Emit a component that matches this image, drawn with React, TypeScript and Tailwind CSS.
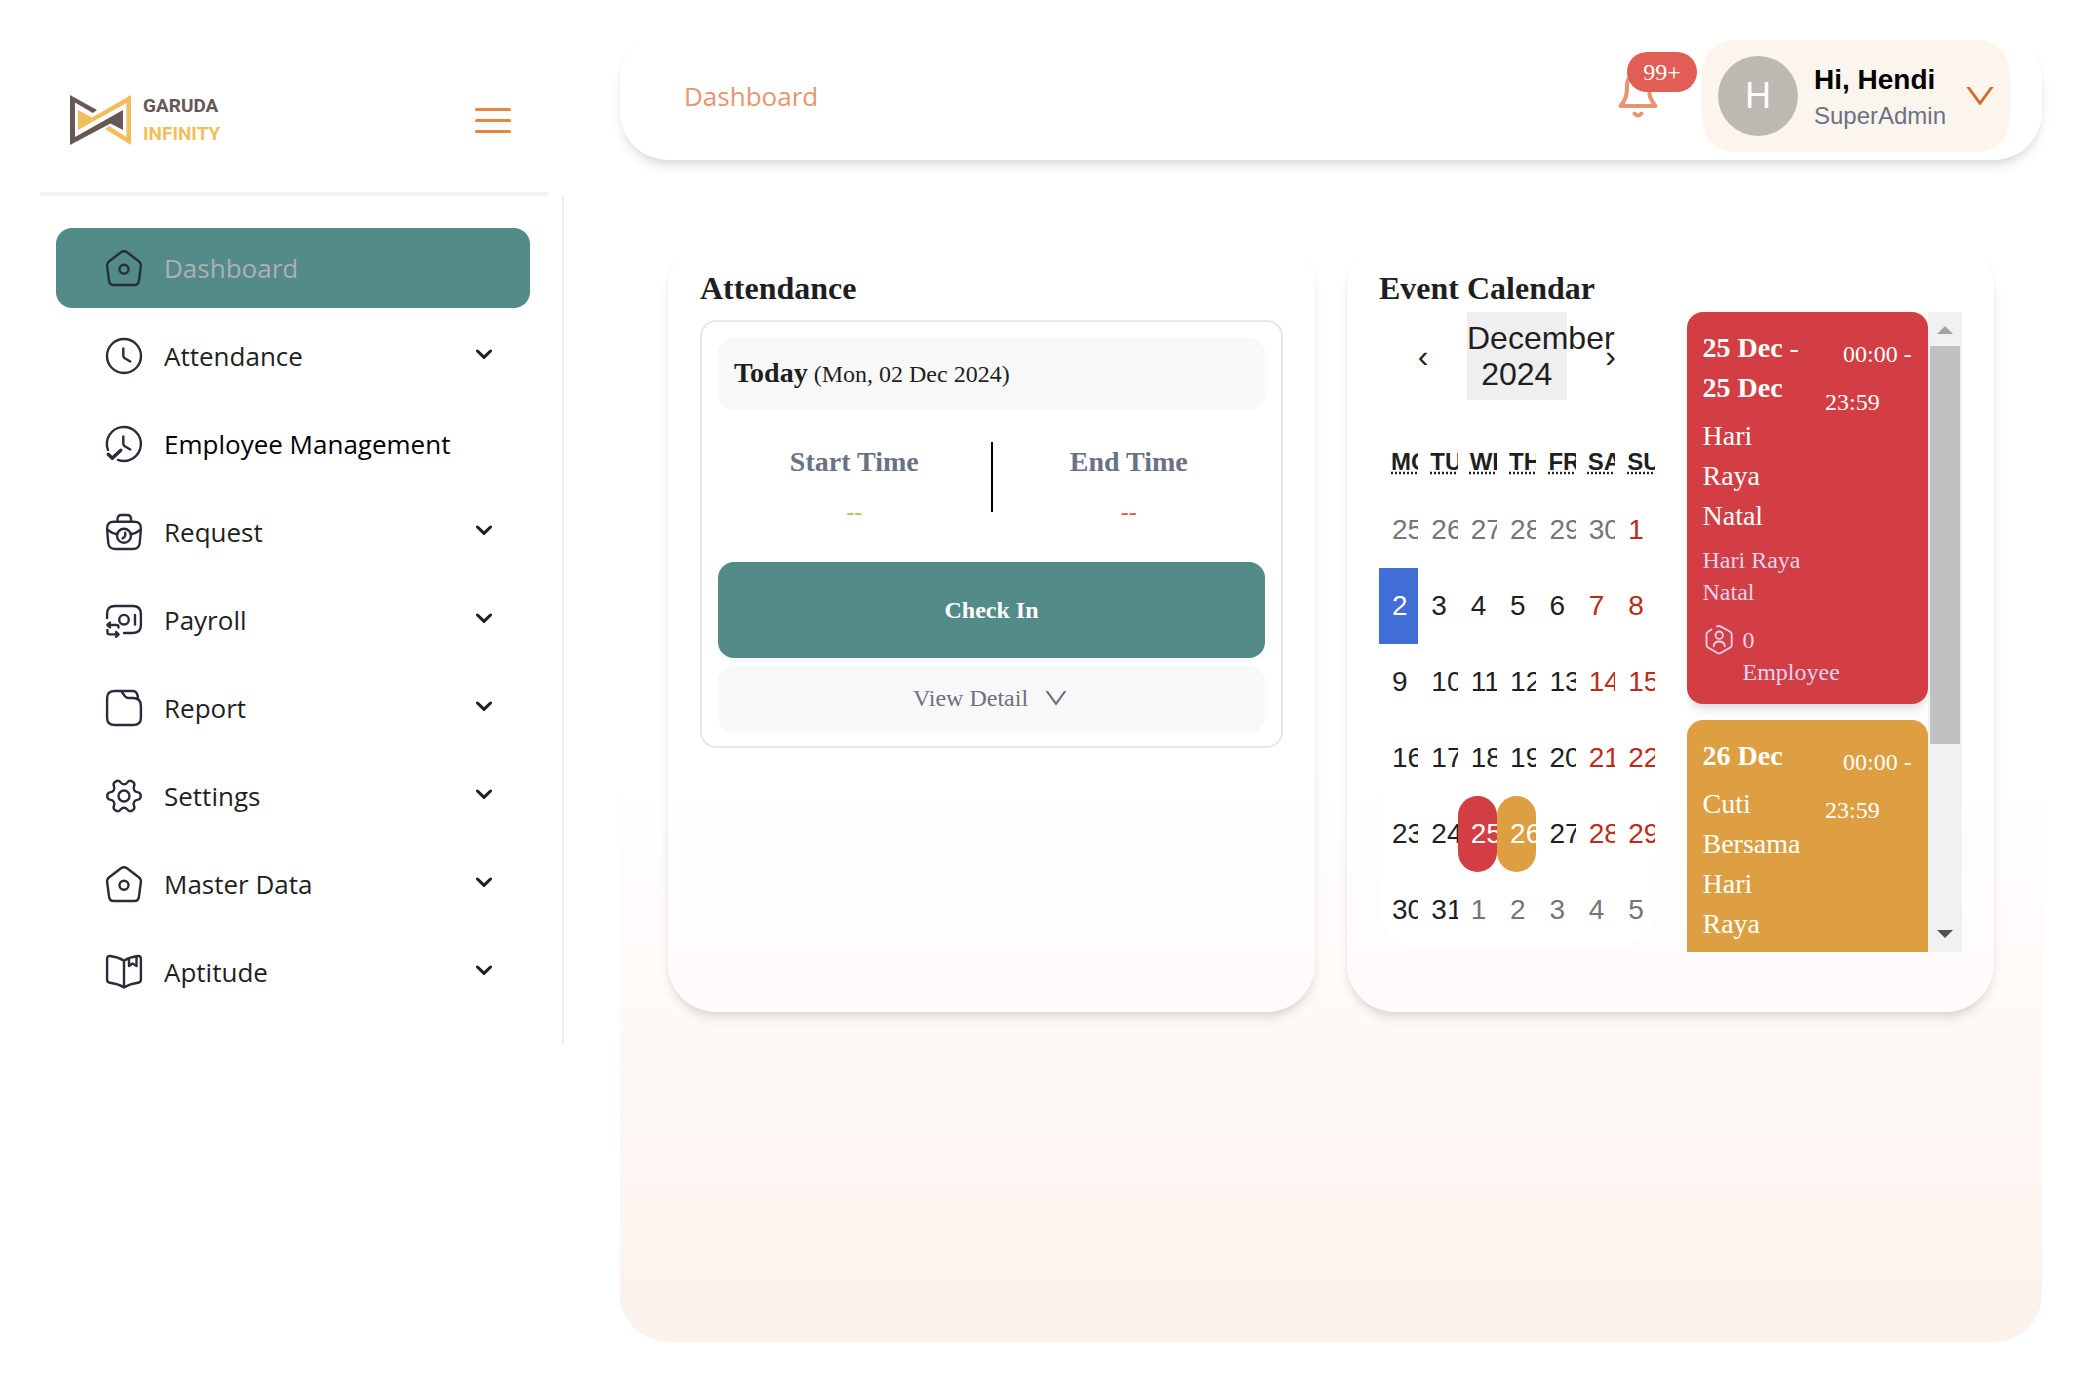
import type { ReactNode } from 'react';
import { AiOutlineDown } from 'react-icons/ai';

const ink = '#292d3a';

function Glyph({ children }: { children: ReactNode }) {
  return (
    <svg
      viewBox="0 0 36 36"
      className="size-9 shrink-0 overflow-visible"
      fill="none"
      stroke={ink}
      strokeWidth="2.4"
      strokeLinecap="round"
      strokeLinejoin="round"
      aria-hidden="true"
    >
      {children}
    </svg>
  );
}

const HomeGlyph = () => (
  <Glyph>
    <path d="M15 2.3Q18 0 21 2.3L32.8 11.2Q35.3 13.1 34.9 16L32.9 31Q32.3 35 28.5 35H7.5Q3.7 35 3.1 31L1.1 16Q.7 13.1 3.2 11.2Z" />
    <circle cx="18" cy="19.3" r="4.5" />
  </Glyph>
);

const ClockGlyph = () => (
  <Glyph>
    <circle cx="18" cy="18" r="17" />
    <path d="M17.3 10.5V17.5Q17.3 19.3 18.8 20.2L24.3 23.5" />
  </Glyph>
);

const ClockCheckGlyph = () => (
  <Glyph>
    <path d="M2 24A17 17 0 1 1 12 33.9" />
    <path d="M17.3 10.5V17.5Q17.3 19.3 18.8 20.2L24.3 23.5" />
    <path d="M2.2 28.3L6.3 32.2L14.8 24.2" strokeWidth="3.4" />
  </Glyph>
);

const BriefcaseGlyph = () => (
  <Glyph>
    <path d="M11.5 7.5V5Q11.5 1 15.5 1H21Q25 1 25 5V7.5" />
    <path d="M8 7.8H28Q35.5 7.8 34.9 15L33.8 28.5Q33.2 35 27 35H9Q2.8 35 2.2 28.5L1.1 15Q.5 7.8 8 7.8Z" />
    <path d="M1.8 16Q6 19.5 11.3 20.3M34.2 16Q30 19.5 24.7 20.3" />
    <circle cx="18" cy="21.8" r="7" />
    <path d="M19.2 18.8V21Q19.2 23 16.5 24.3" />
  </Glyph>
);

const PayrollGlyph = () => (
  <Glyph>
    <path d="M1.1 16V12Q1.1 4 9 4H27Q34.9 4 34.9 12V23Q34.9 31 27 31H18" />
    <circle cx="18" cy="17.7" r="4.8" />
    <path d="M29 13V22.5" />
    <path d="M12.5 25.5V25Q12.5 23 10.5 23H2M4 20.6L1.4 23L4 25.4" />
    <path d="M1.4 28V30Q1.4 32.4 3.8 32.4H12M10 30L12.6 32.4L10 34.8" />
  </Glyph>
);

const FolderGlyph = () => (
  <Glyph>
    <path d="M15.5 1.5L19 6.3Q20.3 8 22.5 8H27Q34.9 8 34.9 16V28Q34.9 35 27 35H9Q1.1 35 1.1 28V8Q1.1 1 9 1H27Q31.5 1 32 8.5" />
  </Glyph>
);

const GearGlyph = () => (
  <Glyph>
    <path
      transform="translate(18 18) rotate(90) scale(1.68) translate(-12 -12)"
      strokeWidth="1.4"
      d="M9.671 4.136a2.34 2.34 0 0 1 4.659 0 2.34 2.34 0 0 0 3.319 1.915 2.34 2.34 0 0 1 2.33 4.033 2.34 2.34 0 0 0 0 3.831 2.34 2.34 0 0 1-2.33 4.033 2.34 2.34 0 0 0-3.319 1.915 2.34 2.34 0 0 1-4.659 0 2.34 2.34 0 0 0-3.32-1.915 2.34 2.34 0 0 1-2.33-4.033 2.34 2.34 0 0 0 0-3.831A2.34 2.34 0 0 1 6.35 6.051a2.34 2.34 0 0 0 3.319-1.915"
    />
    <circle cx="18" cy="18" r="5.5" />
  </Glyph>
);

const BookGlyph = () => (
  <Glyph>
    <path d="M18 6.7Q12 3 4 2Q1.1 1.8 1.1 5V25.5Q1.1 28.4 4 28.8Q12 29.8 18 33.5Q24 29.8 32 28.8Q34.9 28.4 34.9 25.5V5Q34.9 1.8 32 2Q24 3 18 6.7ZM18 6.7V33.5" />
    <path d="M23 4.5V12L26.5 9.5L30.5 12V2.5" />
  </Glyph>
);

const menu = [
  { label: 'Dashboard', icon: <HomeGlyph />, link: true, active: true },
  { label: 'Attendance', icon: <ClockGlyph /> },
  { label: 'Employee Management', icon: <ClockCheckGlyph />, link: true },
  { label: 'Request', icon: <BriefcaseGlyph /> },
  { label: 'Payroll', icon: <PayrollGlyph /> },
  { label: 'Report', icon: <FolderGlyph /> },
  { label: 'Settings', icon: <GearGlyph /> },
  { label: 'Master Data', icon: <HomeGlyph /> },
  { label: 'Aptitude', icon: <BookGlyph /> },
];

const menuRow = "flex h-20 w-full items-center gap-[22px] rounded-2xl pr-[38px] pl-[50px] text-left text-[26px] font-['Open_Sans',sans-serif]";

function Sidebar() {
  return (
    <aside className="w-[532px] shrink-0 pl-2">
      <div className="mr-4 flex h-[164px] items-center justify-between border-b-4 border-[#f2f2f2] pt-4 pr-[37px] pl-[30px]">
        <a href="#home" aria-label="Garuda Infinity" className="flex items-center gap-3">
          <svg viewBox="0 0 61 50" className="h-[50px] w-[61px]" aria-hidden="true">
            <path fill="#665856" d="M0 0L27 15L22.8 18L5 7.5V42L53 15V35L40.5 28.5L0 50Z" />
            <path fill="#efbf5c" d="M61 0V50L35 34L39 31L56.5 42V8L8 35V15L22 22.5Z" />
          </svg>
          <span className="flex flex-col font-[Roboto,sans-serif] text-[19px] leading-7 font-bold">
            <span className="text-[#665856]">GARUDA</span>
            <span className="text-[#efbf5c]">INFINITY</span>
          </span>
        </a>
        <button aria-label="Toggle menu" className="flex flex-col gap-2">
          <span className="h-[3px] w-9 rounded-sm bg-[#e58640]" />
          <span className="h-[3px] w-9 rounded-sm bg-[#e58640]" />
          <span className="h-[3px] w-9 rounded-sm bg-[#e58640]" />
        </button>
      </div>
      <nav className="border-r-2 border-[#f0f0f0] py-8 pr-8 pl-4">
        <ul className="flex flex-col gap-2">
          {menu.map((m) => (
            <li key={m.label}>
              {m.link ? (
                <a href="#page" className={`${menuRow} ${m.active ? 'bg-[#538b89] text-[#b0b0b0]' : 'text-black'}`}>
                  {m.icon}
                  {m.label}
                </a>
              ) : (
                <button className={`${menuRow} text-[#1f1f1f]`}>
                  {m.icon}
                  <span className="flex-1">{m.label}</span>
                  <svg viewBox="0 0 16 16" className="size-4" fill="none" stroke="#1f1f1f" strokeWidth="3" strokeLinecap="round" strokeLinejoin="round" aria-hidden="true">
                    <path d="M1.5 3L8 9.3L14.5 3" />
                  </svg>
                </button>
              )}
            </li>
          ))}
        </ul>
      </nav>
    </aside>
  );
}

const lift = 'shadow-[0_8px_12px_-2px_rgba(0,0,0,0.1),0_4px_8px_-4px_rgba(0,0,0,0.1)]';

function Header() {
  return (
    <header className={`flex items-center justify-between rounded-[48px] bg-white py-2 pr-8 pl-16 ${lift}`}>
      <h1 className="font-['Open_Sans',sans-serif] text-[26px] text-[#e8956f]">Dashboard</h1>
      <div className="flex items-center gap-11">
        <button aria-label="Notifications" className="relative">
          <svg viewBox="0 0 40 48" className="h-12 w-10" fill="none" stroke="#e8956f" strokeWidth="4" strokeLinecap="round" strokeLinejoin="round" aria-hidden="true">
            <path d="M20 2C12 2 9 8 9 14C9 24 7.500 28 2.500 34H37.500C32.500 28 31 24 31 14C31 8 28 2 20 2Z" />
            <path d="M16.500 41.500Q20 45.500 23.500 41.500" />
          </svg>
          <span className="absolute -top-5 left-[9px] flex h-10 w-[70px] items-center justify-center rounded-full bg-[#e25d55] text-2xl text-white">99+</span>
        </button>
        <button className="flex items-center gap-4 rounded-[32px] bg-[#fcf5ee] py-4 pr-3 pl-4 text-left font-['Liberation_Sans',Arial,sans-serif]">
          <span className="flex size-20 items-center justify-center rounded-full bg-[#bdb8b1] text-4xl text-white">H</span>
          <span className="flex flex-col">
            <span className="text-[28px] leading-10 font-bold text-black">Hi, Hendi</span>
            <span className="text-2xl text-gray-500">SuperAdmin</span>
          </span>
          <AiOutlineDown className="size-9 text-[#d6682a]" />
        </button>
      </div>
    </header>
  );
}

function Attendance() {
  return (
    <section className={`rounded-[48px] bg-white/30 p-8 ${lift}`}>
      <h2 className="text-[32px] leading-none font-bold">Attendance</h2>
      <div className="mt-4 rounded-2xl border-2 border-gray-200 p-4">
        <p className="rounded-2xl bg-[#f8f8f8] p-4 text-2xl leading-10">
          <b className="text-[28px] leading-none">Today</b> (Mon, 02 Dec 2024)
        </p>
        <div className="flex pt-8 pb-[34px] text-center">
          <div className="flex-1">
            <p className="text-[28px] leading-10 font-bold text-gray-500">Start Time</p>
            <p className="mt-3.5 text-2xl text-[#a3c93f]">--</p>
          </div>
          <span className="h-[70px] w-0.5 bg-black" />
          <div className="flex-1">
            <p className="text-[28px] leading-10 font-bold text-gray-500">End Time</p>
            <p className="mt-3.5 text-2xl text-[#dc4f45]">--</p>
          </div>
        </div>
        <button className="h-24 w-full rounded-2xl bg-[#538b89] text-2xl font-bold text-white shadow-[0_4px_0_rgba(0,0,0,0.02)]">Check In</button>
        <button className="mt-2 flex h-16 w-full items-center justify-center gap-3.5 rounded-2xl bg-[#f8f8f8] text-2xl text-gray-500 shadow-[0_4px_0_rgba(0,0,0,0.02)]">
          View Detail
          <AiOutlineDown className="size-7" />
        </button>
      </div>
    </section>
  );
}

const weekdays = [
  ['Mon', 'Monday'],
  ['Tue', 'Tuesday'],
  ['Wed', 'Wednesday'],
  ['Thu', 'Thursday'],
  ['Fri', 'Friday'],
  ['Sat', 'Saturday'],
  ['Sun', 'Sunday'],
];

// 42 tiles beginning on Monday 25 November 2024
const days = Array.from({ length: 42 }, (_, i) => {
  const offset = i - 5;
  const date = offset <= 0 ? 30 + offset : offset > 31 ? offset - 31 : offset;
  return { key: i, date, outside: offset <= 0 || offset > 31, weekend: i % 7 > 4 };
});

function dayStyle(d: (typeof days)[number]) {
  if (!d.outside && d.date === 2) return 'bg-[#416ed6] text-white';
  if (!d.outside && d.date === 25) return 'rounded-[20px] bg-[#d23e43] text-white';
  if (!d.outside && d.date === 26) return 'rounded-[20px] bg-[#dd9f41] text-white';
  if (d.outside) return 'text-[#757575]';
  return d.weekend ? 'text-[#bb2c1b]' : 'text-[#1f1f1f]';
}

function Calendar() {
  return (
    <div className="min-w-0 self-start rounded-[40px] bg-white font-['Liberation_Sans',Arial,sans-serif]">
      <div className="flex h-[88px] text-[32px] leading-9">
        <button aria-label="Previous month" className="w-[88px] shrink-0">‹</button>
        <button className="min-w-0 flex-1 bg-[#efefef] text-center">December 2024</button>
        <button aria-label="Next month" className="w-[88px] shrink-0">›</button>
      </div>
      <div className="mt-8 grid grid-cols-7 text-2xl leading-9 font-bold uppercase">
        {weekdays.map(([short, full]) => (
          <div key={short} className="overflow-hidden p-3 text-center">
            <abbr title={full}>{short}</abbr>
          </div>
        ))}
      </div>
      <div className="grid grid-cols-7 text-[28px] leading-9">
        {days.map((d) => (
          <button key={d.key} className={`overflow-hidden px-[13px] py-5 text-center ${dayStyle(d)}`}>
            {d.date}
          </button>
        ))}
      </div>
    </div>
  );
}

function EventCard({ color, date, until, title }: { color: string; date: string; until?: string; title: string }) {
  return (
    <article className={`flex shrink-0 justify-between rounded-2xl p-4 text-white ${color} ${lift}`}>
      <div className="w-28">
        <p className="text-[28px] leading-10">
          <b>{date}</b>
          {until && (
            <>
              {' '}- <b>{until}</b>
            </>
          )}
        </p>
        <h3 className="mt-2 text-[28px] leading-10">{title}</h3>
        <p className="mt-2 text-2xl text-[#e0d4ee]">{title}</p>
        <div className="mt-4 flex items-start gap-2 text-2xl text-[#e0d4ee]">
          <svg viewBox="0 0 32 32" className="size-8 shrink-0" fill="none" stroke="currentColor" strokeWidth="1.8" strokeLinecap="round" strokeLinejoin="round" aria-hidden="true">
            <path d="M8.500 5.500L5 7.700Q3.500 8.600 3.500 10.300V21Q3.500 22.600 5 23.500L14.500 29Q16 29.900 17.500 29L27.300 23.500Q28.700 22.600 28.700 21V10.300Q28.700 8.600 27.300 7.700L17.500 2.400Q16 1.600 14 2.400" />
            <circle cx="16.200" cy="11.200" r="3.700" />
            <path d="M10.700 22.300Q10.700 17.500 16.200 17.500T21.700 22.300" />
          </svg>
          <span className="min-w-0 flex-1">0 Employee</span>
        </div>
      </div>
      <p className="w-[87px] pt-0.5 indent-[18px] text-2xl leading-[48px]">00:00 - 23:59</p>
    </article>
  );
}

function Events() {
  return (
    <div className="flex h-[640px] min-w-0 overflow-hidden">
      <div className="flex min-w-0 flex-1 flex-col gap-4 overflow-hidden">
        <EventCard color="bg-[#d23e43]" date="25 Dec" until="25 Dec" title="Hari Raya Natal" />
        <EventCard color="bg-[#dd9f41]" date="26 Dec" title="Cuti Bersama Hari Raya Natal" />
      </div>
      <div className="flex w-[34px] shrink-0 flex-col items-center bg-[#f1f1f1]" aria-hidden="true">
        <svg viewBox="0 0 34 34" className="size-[34px]">
          <path d="M9 22L17 14L25 22Z" fill="#a3a3a3" />
        </svg>
        <div className="mb-auto h-[398px] w-[30px] bg-[#c1c1c1]" />
        <svg viewBox="0 0 34 34" className="size-[34px]">
          <path d="M9 12L17 20L25 12Z" fill="#505050" />
        </svg>
      </div>
    </div>
  );
}

export default function App() {
  return (
    <div className="flex min-h-screen gap-14 bg-white p-8 font-['Liberation_Serif','Times_New_Roman',serif] text-[#1f1f1f]">
      <Sidebar />
      <div className="flex min-w-0 flex-1 flex-col gap-8">
        <Header />
        <main className="flex-1 rounded-[48px] bg-linear-to-b from-white via-white to-[#fcf2ec] p-12">
          <div className="grid grid-cols-2 gap-8">
            <Attendance />
            <section className={`rounded-[48px] bg-white/30 px-8 pt-8 pb-[60px] ${lift}`}>
              <h2 className="text-[32px] leading-none font-bold">Event Calendar</h2>
              <div className="mt-2 grid grid-cols-2 gap-8">
                <Calendar />
                <Events />
              </div>
            </section>
          </div>
        </main>
      </div>
    </div>
  );
}
